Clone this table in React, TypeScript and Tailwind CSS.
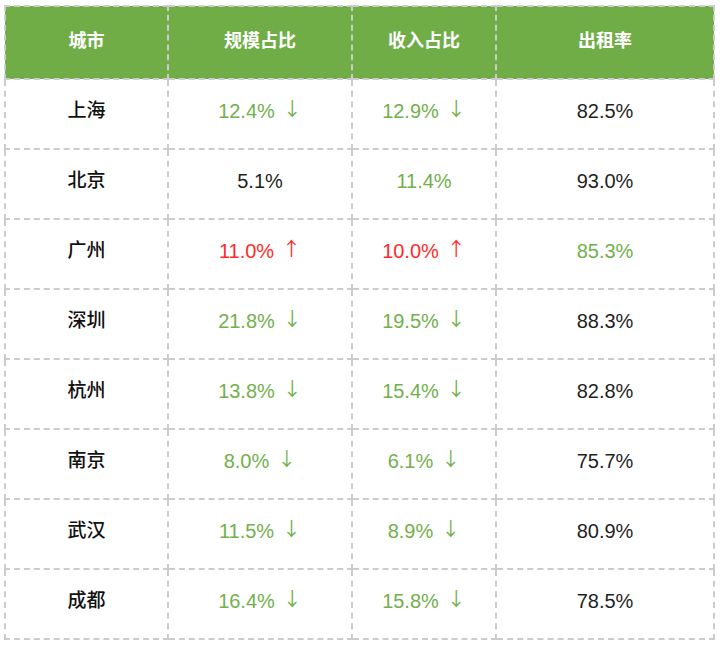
type Cell = { value: string; trend?: "up" | "down"; tone?: "green" | "red" | "plain" };

type Row = { city: string; scale: Cell; income: Cell; occupancy: Cell };

const rows: Row[] = [
  { city: "上海", scale: { value: "12.4%", trend: "down" }, income: { value: "12.9%", trend: "down" }, occupancy: { value: "82.5%" } },
  { city: "北京", scale: { value: "5.1%" }, income: { value: "11.4%", tone: "green" }, occupancy: { value: "93.0%" } },
  { city: "广州", scale: { value: "11.0%", trend: "up" }, income: { value: "10.0%", trend: "up" }, occupancy: { value: "85.3%", tone: "green" } },
  { city: "深圳", scale: { value: "21.8%", trend: "down" }, income: { value: "19.5%", trend: "down" }, occupancy: { value: "88.3%" } },
  { city: "杭州", scale: { value: "13.8%", trend: "down" }, income: { value: "15.4%", trend: "down" }, occupancy: { value: "82.8%" } },
  { city: "南京", scale: { value: "8.0%", trend: "down" }, income: { value: "6.1%", trend: "down" }, occupancy: { value: "75.7%" } },
  { city: "武汉", scale: { value: "11.5%", trend: "down" }, income: { value: "8.9%", trend: "down" }, occupancy: { value: "80.9%" } },
  { city: "成都", scale: { value: "16.4%", trend: "down" }, income: { value: "15.8%", trend: "down" }, occupancy: { value: "78.5%" } },
];

const headers = ["城市", "规模占比", "收入占比", "出租率"];

function toneOf(cell: Cell): string {
  if (cell.trend === "up" || cell.tone === "red") return "text-[#ff2a2a]";
  if (cell.trend === "down" || cell.tone === "green") return "text-[#72b04c]";
  return "text-[#1f1f1f]";
}

function ValueCell({ cell }: { cell: Cell }) {
  return (
    <td className="h-[70px] border-2 border-dashed border-[#cccccc] pb-[7px] text-center align-middle">
      <span className={`text-[20px] ${toneOf(cell)}`}>
        {cell.value}
        {cell.trend ? (
          <span className="relative -top-[2px] ml-[8px] font-['Noto_Sans_CJK_SC',sans-serif] text-[19px] font-normal">
            {cell.trend === "up" ? "↑" : "↓"}
          </span>
        ) : null}
      </span>
    </td>
  );
}

export default function App() {
  return (
    <div className="min-h-[647px] bg-white pl-[4px] pt-[5px] font-['Liberation_Sans','Noto_Sans_CJK_SC',sans-serif]">
      <table className="w-[709px] table-fixed border-collapse">
        <colgroup>
          <col className="w-[163px]" />
          <col className="w-[184px]" />
          <col className="w-[144px]" />
          <col className="w-[218px]" />
        </colgroup>
        <thead>
          <tr className="bg-[#70ad47]">
            {headers.map((label) => (
              <th
                key={label}
                className="h-[73px] border-2 border-dashed border-[#cccccc] pb-[2px] text-center align-middle text-[18px] font-bold text-white"
              >
                {label}
              </th>
            ))}
          </tr>
        </thead>
        <tbody>
          {rows.map((row) => (
            <tr key={row.city}>
              <td className="h-[70px] border-2 border-dashed border-[#cccccc] pb-[5px] text-center align-middle text-[19px] font-medium text-[#111]">
                {row.city}
              </td>
              <ValueCell cell={row.scale} />
              <ValueCell cell={row.income} />
              <ValueCell cell={row.occupancy} />
            </tr>
          ))}
        </tbody>
      </table>
    </div>
  );
}
